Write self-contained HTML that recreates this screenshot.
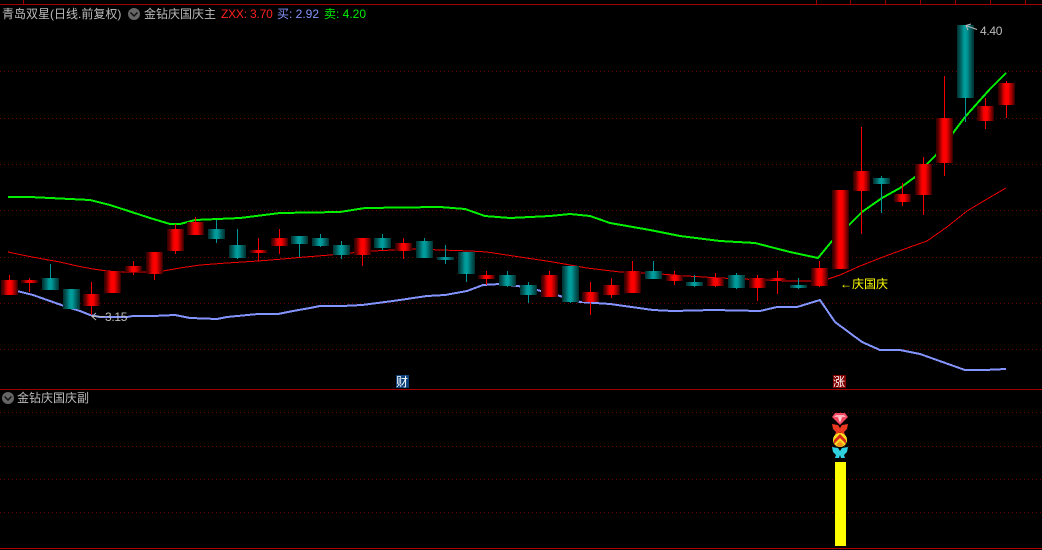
<!DOCTYPE html>
<html><head><meta charset="utf-8"><style>
html,body{margin:0;padding:0;background:#000;width:1042px;height:550px;overflow:hidden}
#w{position:relative;width:1042px;height:550px;background:#000;overflow:hidden}
svg{position:absolute;left:0;top:0}
.t{position:absolute;font:12px/14px "Liberation Sans","WenQuanYi Zen Hei","Noto Sans CJK SC",sans-serif;white-space:nowrap;color:#bcbcbc}
</style></head><body><div id="w">
<svg width="1042" height="550" viewBox="0 0 1042 550">
<defs>
<linearGradient id="r" x1="0" x2="1" y1="0" y2="0"><stop offset="0" stop-color="#300000"/><stop offset=".15" stop-color="#600000"/><stop offset=".35" stop-color="#e00000"/><stop offset=".45" stop-color="#ff0000"/><stop offset=".6" stop-color="#ff0000"/><stop offset=".8" stop-color="#a00000"/><stop offset="1" stop-color="#300000"/></linearGradient>
<linearGradient id="c" x1="0" x2="1" y1="0" y2="0"><stop offset="0" stop-color="#003030"/><stop offset=".2" stop-color="#005c5c"/><stop offset=".42" stop-color="#009c9c"/><stop offset=".55" stop-color="#009c9c"/><stop offset=".8" stop-color="#005c5c"/><stop offset="1" stop-color="#003030"/></linearGradient>
</defs>
<g shape-rendering="crispEdges">
<path d="M0 4.500H1042M0 389.500H1042" stroke="#a00000" fill="none"/>
<path d="M0 548.500H1042" stroke="#b00000"/>
<path d="M23.500 0V4M816.500 0V4M850.500 0V4M885.500 0V4M920.500 0V4M955.500 0V4M990.500 0V4M1025.500 0V4" stroke="#a00000"/>
<path d="M0 71.500H1042M0 118.500H1042M0 164.500H1042M0 210.500H1042M0 257.500H1042M0 303.500H1042M0 349.500H1042M0 412.500H1042M0 446.500H1042M0 479.500H1042M0 512.500H1042" stroke="#700000" stroke-dasharray="1 3" fill="none"/>
<polyline fill="none" stroke="#00f000" stroke-width="2" points="8,197 30,197 50,198 90,200 110,205 150,218 170,224 180,224 195,220 240,218 280,213 340,212 365,208 440,207 465,209 485,216 510,218 550,216 570,214 590,216 610,223 650,230 680,236 720,241 755,243 790,252 818,258 832,241 849,225 862,212 882,198 900,188 915,177 928,163 936,155 953,133 965,117 990,89 1006,73"/>
<polyline fill="none" stroke="#f00000" stroke-width="1" points="8,252 27,256 43,259 60,262 77,266 93,269 107,271 123,272 147,272 163,271 180,268 200,265 227,263 258,261 283,259 305,257 330,255 350,253 373,251 393,250 413,249 470,251 487,252 500,254 520,257 553,262 587,268 620,272 647,273 687,276 720,278 787,281 811,281 828,279 840,275 860,266 883,257 910,247 927,241 947,227 967,211 987,199 1006,188"/>
<polyline fill="none" stroke="#8494ff" stroke-width="2" points="8,288 17,291 33,295 50,301 67,307 80,311 90,315 100,317 127,317 133,316 153,316 175,315 190,318 217,319 227,317 258,314 278,314 293,311 310,308 320,306 342,306 362,305 393,301 427,296 445,295 467,291 483,285 500,284 518,286 537,290 560,296 580,302 610,304 653,310 673,311 713,310 760,311 777,307 797,307 820,300 835,322 862,342 880,350 900,350 920,354 965,370 985,370 1006,369"/>
<path fill="none" stroke="#f00000" d="M9.500 275V295M29.500 278V292M91.500 282V315M133.500 261V275M154.500 252V280M175.500 224V254M195.500 217V235M258.500 238V261M279.500 229V254M362.500 238V266M403.500 238V259M486.500 271V285M549.500 271V297M590.500 282V315M611.500 278V298M632.500 261V293M674.500 271V285M715.500 273V287M757.500 275V301M777.500 271V294M819.500 261V287M861.500 127V234M902.500 183V206M923.500 157V215M944.500 76V176M985.500 98V129M1006.500 81V118"/>
<path fill="none" stroke="#009494" d="M50.500 264V290M216.500 220V243M237.500 229V259M299.500 236V257M320.500 234V247M341.500 241V259M382.500 234V250M424.500 238V258M445.500 245V264M466.500 252V282M507.500 271V287M528.500 282V303M570.500 266V303M653.500 261V279M694.500 275V287M736.500 273V289M798.500 278V289M881.500 176V213M965.500 25V122"/>
<g fill="url(#r)">
<rect x="1" y="280" width="17" height="15"/><rect x="21" y="280" width="17" height="3"/><rect x="83" y="294" width="17" height="12"/><rect x="104" y="271" width="17" height="22"/><rect x="125" y="266" width="17" height="6"/><rect x="146" y="252" width="17" height="22"/><rect x="167" y="229" width="17" height="22"/><rect x="187" y="222" width="17" height="13"/><rect x="250" y="250" width="17" height="3"/><rect x="271" y="238" width="17" height="8"/><rect x="354" y="238" width="17" height="17"/><rect x="395" y="243" width="17" height="8"/><rect x="478" y="275" width="17" height="4"/><rect x="541" y="275" width="17" height="22"/><rect x="582" y="292" width="17" height="10"/><rect x="603" y="285" width="17" height="10"/><rect x="624" y="271" width="17" height="22"/><rect x="666" y="275" width="17" height="6"/><rect x="707" y="278" width="17" height="8"/><rect x="749" y="278" width="17" height="10"/><rect x="769" y="278" width="17" height="2"/><rect x="811" y="268" width="17" height="18"/><rect x="832" y="190" width="17" height="79"/><rect x="853" y="171" width="17" height="20"/><rect x="894" y="194" width="17" height="8"/><rect x="915" y="164" width="17" height="31"/><rect x="936" y="118" width="17" height="45"/><rect x="977" y="106" width="17" height="15"/><rect x="998" y="83" width="17" height="22"/>
</g>
<g fill="url(#c)">
<rect x="42" y="278" width="17" height="12"/><rect x="63" y="289" width="17" height="20"/><rect x="208" y="229" width="17" height="10"/><rect x="229" y="245" width="17" height="13"/><rect x="291" y="236" width="17" height="8"/><rect x="312" y="238" width="17" height="8"/><rect x="333" y="245" width="17" height="10"/><rect x="374" y="238" width="17" height="10"/><rect x="416" y="241" width="17" height="17"/><rect x="437" y="257" width="17" height="3"/><rect x="458" y="252" width="17" height="22"/><rect x="499" y="275" width="17" height="11"/><rect x="520" y="285" width="17" height="10"/><rect x="562" y="266" width="17" height="36"/><rect x="645" y="271" width="17" height="8"/><rect x="686" y="282" width="17" height="4"/><rect x="728" y="275" width="17" height="13"/><rect x="790" y="285" width="17" height="3"/><rect x="873" y="178" width="17" height="6"/><rect x="957" y="25" width="17" height="73"/>
</g>
<rect x="835" y="462" width="11" height="84" fill="#ffff00"/>
<rect x="396" y="375" width="13" height="13" fill="#0c4078"/>
<rect x="833" y="375" width="13" height="13" fill="#800000"/>
</g>
<circle cx="134" cy="14" r="6" fill="#666"/><path d="M130.500 12.500L134 16L137.500 12.500" fill="none" stroke="#111" stroke-width="1.500"/>
<circle cx="8" cy="398" r="6" fill="#666"/><path d="M4.500 396.500L8 400L11.500 396.500" fill="none" stroke="#111" stroke-width="1.500"/>
<path d="M105 316.500H92M96 313L92 316.500L96 320" fill="none" stroke="#b8b8b8"/>
<path d="M977 29.500L967 26M971 24L966 25.500L968 30" fill="none" stroke="#b8b8b8"/>
<path d="M835 413H845L848 417L840 425L832 417Z" fill="#f04860"/>
<path d="M836 415H844L846 417H834Z" fill="#ffb0b8"/>
<path d="M838 417H842L840 423Z" fill="#ffd0d8"/>
<path d="M832 424L838 425L840 428L842 425L848 424L847 429L844 432L845 435L841 435L840 432L839 435L835 435L836 432L833 429Z" fill="#e83820"/>
<circle cx="840" cy="440" r="7" fill="#f8e020"/>
<path d="M834 440L840 434L846 440L846 444L840 438L834 444Z" fill="#d82818"/>
<path d="M836 445L840 441L844 445L840 447Z" fill="#f89018"/>
<path d="M832 447L838 448L840 451L842 448L848 447L847 452L844 455L845 458L841 458L840 455L839 458L835 458L836 455L833 452Z" fill="#30d0e0"/>
</svg>
<div class="t" style="left:2px;top:7px">青岛双星(日线.前复权)</div>
<div class="t" style="left:144px;top:7px">金钻庆国庆主</div>
<div class="t" style="left:221px;top:7px;color:#ff2020;letter-spacing:-.2px">ZXX: 3.70</div>
<div class="t" style="left:277px;top:7px;color:#8494ff">买: 2.92</div>
<div class="t" style="left:324px;top:7px;color:#00f000">卖: 4.20</div>
<div class="t" style="left:17px;top:391px">金钻庆国庆副</div>
<div class="t" style="left:396px;top:375px;color:#fff">财</div>
<div class="t" style="left:833px;top:375px;color:#fff">涨</div>
<div class="t" style="left:840px;top:277px;color:#ffff00">←庆国庆</div>
<div class="t" style="left:980px;top:24px;letter-spacing:-.3px">4.40</div>
<div class="t" style="left:105px;top:310px;letter-spacing:-.3px">3.15</div>
</div></body></html>
